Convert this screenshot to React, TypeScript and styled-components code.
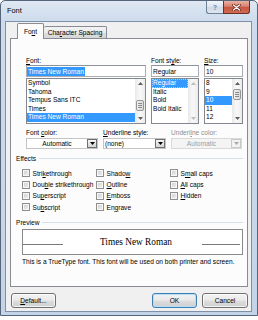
import React from "react";
import styled, { createGlobalStyle } from "styled-components";

const GlobalStyle = createGlobalStyle`
  html, body { margin: 0; padding: 0; background: #ffffff; }
  body {
    font-family: "Liberation Sans", Arial, sans-serif;
    font-size: 6.6px;
    color: #000;
  }
  * { box-sizing: border-box; }
`;

const Window = styled.div`
  width: 258px;
  height: 316px;
  border: 1px solid #56667a;
  border-radius: 5px 5px 0 0;
  background: linear-gradient(180deg, #dfe8f3 0px, #cddbec 20px, #c4d4e8 100%);
  padding: 0 5px 3px 4px;
  display: flex;
  flex-direction: column;
`;

const TitleBar = styled.div`
  height: 20px;
  display: flex;
  align-items: flex-start;
  flex: none;
`;

const Title = styled.div`
  flex: 1;
  font-size: 7.4px;
  line-height: 20px;
  padding-left: 2px;
  color: #000;
`;

const CaptionButtons = styled.div`
  display: flex;
  margin-right: 2px;
`;

const HelpButton = styled.div`
  width: 17px;
  height: 13px;
  border: 1px solid #6f8196;
  border-top: none;
  border-right: none;
  border-radius: 0 0 0 3px;
  background: linear-gradient(180deg, #f1f5fa, #dbe4ee 50%, #cfdae7 51%, #dde6f0);
  display: flex;
  align-items: center;
  justify-content: center;
  font-size: 6.5px;
  font-weight: bold;
  color: #6a7a8c;
`;

const CloseButton = styled.div`
  width: 27px;
  height: 13px;
  border: 1px solid #6a2f27;
  border-top: none;
  border-radius: 0 0 3px 0;
  background: linear-gradient(180deg, #eab2a4, #d8806f 45%, #c75641 50%, #d06a52);
  display: flex;
  align-items: center;
  justify-content: center;
`;

const Client = styled.div`
  flex: 1;
  border: 1px solid #7d91a8;
  background: #f0f0f0;
  display: flex;
  flex-direction: column;
`;

const TabStrip = styled.div`
  height: 17px;
  margin-bottom: -1px;
  padding-left: 11px;
  display: flex;
  align-items: flex-end;
  position: relative;
  z-index: 1;
`;

const Tab = styled.div<{ $active?: boolean }>`
  display: flex;
  align-items: center;
  justify-content: center;
  white-space: nowrap;
  border: 1px solid #898c95;
  border-bottom: none;
  border-radius: 2px 2px 0 0;
  ${(p) =>
    p.$active
      ? `
    width: 27px;
    height: 16px;
    background: #fcfcfc;
    padding-bottom: 1px;
  `
      : `
    width: 63px;
    height: 12px;
    margin-bottom: 1px;
    border-left: none;
    background: linear-gradient(180deg, #f3f3f3, #ebebeb 50%, #dedede 51%, #d6d6d6);
  `}
`;

const Panel = styled.div`
  height: 249px;
  margin: 0 3px 0 4px;
  border: 1px solid #898c95;
  background: #fcfcfc;
  padding: 0 4px 0 5px;
  display: flex;
  flex-direction: column;
  flex: none;
`;

const FontRow = styled.div`
  display: grid;
  grid-template-columns: 120px 48px 39px;
  column-gap: 5px;
  margin: 17px 0 0 10px;
`;

const ColorRow = styled.div`
  display: grid;
  grid-template-columns: 72px 63px 71px;
  column-gap: 5px;
  margin: 4px 0 0 10px;
`;

const Field = styled.div`
  display: flex;
  flex-direction: column;
`;

const Label = styled.div<{ $disabled?: boolean }>`
  height: 9px;
  line-height: 9px;
  white-space: nowrap;
  color: ${(p) => (p.$disabled ? "#8d8d8d" : "#000")};
`;

const TextBox = styled.div`
  height: 12px;
  border: 1px solid #abadb3;
  border-top-color: #8e939b;
  background: #fff;
  display: flex;
  align-items: center;
  padding-left: 1px;
  white-space: nowrap;
  line-height: 9px;
`;

const SelText = styled.span`
  background: #3399ff;
  color: #fff;
  margin-left: -1px;
  padding: 0 1px;
`;

const ListBox = styled.div`
  margin-top: 1px;
  height: 46px;
  border: 1px solid #828790;
  background: #fff;
  display: flex;
`;

const Items = styled.div`
  flex: 1;
  display: flex;
  flex-direction: column;
  overflow: hidden;
`;

const Item = styled.div<{ $selected?: boolean; $focused?: boolean }>`
  height: 8.5px;
  line-height: 8.5px;
  padding-left: 1px;
  white-space: nowrap;
  flex: none;
  background: ${(p) => (p.$selected ? "#3399ff" : "transparent")};
  color: ${(p) => (p.$selected ? "#fff" : "#000")};
  outline: ${(p) => (p.$focused ? "1px dotted #a9d3ff" : "none")};
  outline-offset: -1px;
`;

const ScrollBar = styled.div`
  width: 10px;
  flex: none;
  display: flex;
  flex-direction: column;
  background: linear-gradient(90deg, #e8e8e8, #f6f6f6 40%, #f6f6f6 60%, #ebebeb);
`;

const ScrollArrow = styled.div`
  height: 9px;
  flex: none;
  display: flex;
  align-items: center;
  justify-content: center;
`;

const ScrollTrack = styled.div`
  flex: 1;
  display: flex;
  flex-direction: column;
  padding: 0 1px;
`;

const Thumb = styled.div`
  height: 11px;
  flex: none;
  border: 1px solid #959595;
  border-radius: 2px;
  background: linear-gradient(90deg, #f5f5f5, #e6e6e6 50%, #d9d9d9);
  display: flex;
  flex-direction: column;
  align-items: center;
  justify-content: center;
  gap: 1px;
`;

const Grip = styled.span`
  width: 4px;
  height: 1px;
  background: #8a8a8a;
`;

const Combo = styled.div<{ $disabled?: boolean }>`
  margin-top: 1px;
  height: 11px;
  display: flex;
  border: 1px solid ${(p) => (p.$disabled ? "#d9d9d9" : "#c4c4c4")};
  background: ${(p) => (p.$disabled ? "#f4f4f4" : "#fff")};
`;

const ComboValue = styled.div<{ $center?: boolean; $disabled?: boolean }>`
  flex: 1;
  line-height: 9px;
  white-space: nowrap;
  text-align: ${(p) => (p.$center ? "center" : "left")};
  padding-left: ${(p) => (p.$center ? "0" : "1px")};
  color: ${(p) => (p.$disabled ? "#a0a0a0" : "#000")};
`;

const DropButton = styled.div<{ $disabled?: boolean }>`
  width: 10px;
  flex: none;
  border: 1px solid ${(p) => (p.$disabled ? "#c9c9c9" : "#6f6f6f")};
  background: ${(p) =>
    p.$disabled
      ? "#f2f2f2"
      : "linear-gradient(180deg, #f6f6f6, #e4e4e4 50%, #d5d5d5)"};
  display: flex;
  align-items: center;
  justify-content: center;
`;

const GroupHeader = styled.div`
  margin-top: 5px;
  height: 9px;
  line-height: 9px;
  display: flex;
  align-items: center;
  &::after {
    content: "";
    flex: 1;
    height: 1px;
    margin-left: 3px;
    background: #d5dfe5;
  }
`;

const PreviewHeader = styled(GroupHeader)`
  margin-top: 4.5px;
`;

const CheckGrid = styled.div`
  display: grid;
  grid-template-columns: 74px 74px 1fr;
  grid-template-rows: repeat(4, 11.4px);
  grid-auto-flow: column;
  margin: 4.5px 0 0 6px;
`;

const CheckItem = styled.label`
  display: flex;
  align-items: center;
  gap: 2.5px;
  white-space: nowrap;
`;

const CheckBox = styled.span`
  width: 8px;
  height: 8px;
  flex: none;
  border: 1px solid #8e8f8f;
  background: linear-gradient(135deg, #cdcdcd, #f3f3f3);
  box-shadow: inset 0 0 0 1px #f7f7f7;
`;

const PreviewBox = styled.div`
  margin: 2.5px 0 0 6px;
  width: 221px;
  height: 26px;
  border: 1px solid #8a8a8a;
  background: #fff;
  display: flex;
  align-items: center;
`;

const BaseLine = styled.span<{ $w: number }>`
  width: ${(p) => p.$w}px;
  height: 1px;
  margin-top: 5px;
  background: #7a7a7a;
  flex: none;
`;

const PreviewText = styled.div`
  flex: 1;
  text-align: center;
  padding-left: 7px;
  font-family: "Liberation Serif", "Times New Roman", serif;
  font-size: 9.3px;
  white-space: nowrap;
`;

const Description = styled.div`
  margin: 2px 0 0 6px;
  line-height: 9px;
  white-space: nowrap;
`;

const ButtonRow = styled.div`
  display: flex;
  gap: 5px;
  margin-top: 6px;
  padding: 0 3px 0 5px;
  height: 15px;
  flex: none;
`;

const Spacer = styled.div`
  flex: 1;
`;

const Button = styled.button<{ $w: number; $default?: boolean }>`
  width: ${(p) => p.$w}px;
  height: 15px;
  padding: 0;
  font: inherit;
  font-size: 6.6px;
  color: #000;
  border: 1px solid ${(p) => (p.$default ? "#3c7fb1" : "#707070")};
  border-radius: 3px;
  background: linear-gradient(180deg, #f2f2f2 0%, #ebebeb 45%, #dddddd 55%, #cfcfcf 100%);
  box-shadow: inset 0 0 0 1px ${(p) => (p.$default ? "#b6dff7" : "rgba(255,255,255,0.75)")};
`;

const Arrow = ({ dir, color }: { dir: "up" | "down"; color: string }) => (
  <svg width="5" height="3" viewBox="0 0 5 3">
    <polygon points={dir === "up" ? "0,3 5,3 2.5,0" : "0,0 5,0 2.5,3"} fill={color} />
  </svg>
);

const Scroll = ({ thumbTop, disabled }: { thumbTop?: number; disabled?: boolean }) => {
  const c = disabled ? "#bdbdbd" : "#5e5e5e";
  return (
    <ScrollBar>
      <ScrollArrow>
        <Arrow dir="up" color={c} />
      </ScrollArrow>
      <ScrollTrack>
        {thumbTop !== undefined && (
          <Thumb style={{ marginTop: thumbTop }}>
            <Grip />
            <Grip />
            <Grip />
          </Thumb>
        )}
      </ScrollTrack>
      <ScrollArrow>
        <Arrow dir="down" color={c} />
      </ScrollArrow>
    </ScrollBar>
  );
};

const fonts = ["Symbol", "Tahoma", "Tempus Sans ITC", "Times", "Times New Roman"];
const styles = ["Regular", "Italic", "Bold", "Bold Italic"];
const sizes = ["8", "9", "10", "11", "12"];

const effects: [string, number][] = [
  ["Strikethrough", 4],
  ["Double strikethrough", 3],
  ["Superscript", 2],
  ["Subscript", 2],
  ["Shadow", 5],
  ["Outline", 0],
  ["Emboss", 0],
  ["Engrave", 2],
  ["Small caps", 1],
  ["All caps", 0],
  ["Hidden", 0],
];

const Acc = ({ text, i }: { text: string; i: number }) => (
  <>
    {text.slice(0, i)}
    <u>{text[i]}</u>
    {text.slice(i + 1)}
  </>
);

export default function App() {
  return (
    <>
      <GlobalStyle />
      <Window>
        <TitleBar>
          <Title>Font</Title>
          <CaptionButtons>
            <HelpButton>?</HelpButton>
            <CloseButton>
              <svg width="9" height="7" viewBox="0 0 9 7">
                <path d="M1.5 1 L7.5 6 M7.5 1 L1.5 6" stroke="#5a1f17" strokeWidth="2.6" strokeLinecap="round" />
                <path d="M1.5 1 L7.5 6 M7.5 1 L1.5 6" stroke="#ffffff" strokeWidth="1.4" strokeLinecap="round" />
              </svg>
            </CloseButton>
          </CaptionButtons>
        </TitleBar>
        <Client>
          <TabStrip>
            <Tab $active>
              <Acc text="Font" i={2} />
            </Tab>
            <Tab>
              <Acc text="Character Spacing" i={3} />
            </Tab>
          </TabStrip>
          <Panel>
            <FontRow>
              <Field>
                <Label>
                  <Acc text="Font:" i={0} />
                </Label>
                <TextBox>
                  <SelText>Times New Roman</SelText>
                </TextBox>
                <ListBox>
                  <Items>
                    {fonts.map((f) => (
                      <Item key={f} $selected={f === "Times New Roman"}>
                        {f}
                      </Item>
                    ))}
                  </Items>
                  <Scroll thumbTop={12} />
                </ListBox>
              </Field>
              <Field>
                <Label>
                  <Acc text="Font style:" i={7} />
                </Label>
                <TextBox>Regular</TextBox>
                <ListBox>
                  <Items>
                    {styles.map((s) => (
                      <Item key={s} $selected={s === "Regular"} $focused={s === "Regular"}>
                        {s}
                      </Item>
                    ))}
                  </Items>
                  <Scroll disabled />
                </ListBox>
              </Field>
              <Field>
                <Label>
                  <Acc text="Size:" i={0} />
                </Label>
                <TextBox>10</TextBox>
                <ListBox>
                  <Items>
                    {sizes.map((s) => (
                      <Item key={s} $selected={s === "10"}>
                        {s}
                      </Item>
                    ))}
                  </Items>
                  <Scroll thumbTop={1} />
                </ListBox>
              </Field>
            </FontRow>

            <ColorRow>
              <Field>
                <Label>
                  <Acc text="Font color:" i={5} />
                </Label>
                <Combo>
                  <ComboValue $center>Automatic</ComboValue>
                  <DropButton>
                    <Arrow dir="down" color="#000" />
                  </DropButton>
                </Combo>
              </Field>
              <Field>
                <Label>
                  <Acc text="Underline style:" i={0} />
                </Label>
                <Combo>
                  <ComboValue>(none)</ComboValue>
                  <DropButton>
                    <Arrow dir="down" color="#000" />
                  </DropButton>
                </Combo>
              </Field>
              <Field>
                <Label $disabled>
                  <Acc text="Underline color:" i={6} />
                </Label>
                <Combo $disabled>
                  <ComboValue $center $disabled>
                    Automatic
                  </ComboValue>
                  <DropButton $disabled>
                    <Arrow dir="down" color="#a8a8a8" />
                  </DropButton>
                </Combo>
              </Field>
            </ColorRow>

            <GroupHeader>Effects</GroupHeader>
            <CheckGrid>
              {effects.map(([t, i]) => (
                <CheckItem key={t}>
                  <CheckBox />
                  <span>
                    <Acc text={t} i={i} />
                  </span>
                </CheckItem>
              ))}
            </CheckGrid>

            <PreviewHeader>Preview</PreviewHeader>
            <PreviewBox>
              <BaseLine $w={40} />
              <PreviewText>Times New Roman</PreviewText>
              <BaseLine $w={38} style={{ marginRight: 2 }} />
            </PreviewBox>
            <Description>
              This is a TrueType font. This font will be used on both printer and screen.
            </Description>
          </Panel>
          <ButtonRow>
            <Button $w={45}>
              <Acc text="Default..." i={0} />
            </Button>
            <Spacer />
            <Button $w={45} $default>
              OK
            </Button>
            <Button $w={46}>Cancel</Button>
          </ButtonRow>
        </Client>
      </Window>
    </>
  );
}
